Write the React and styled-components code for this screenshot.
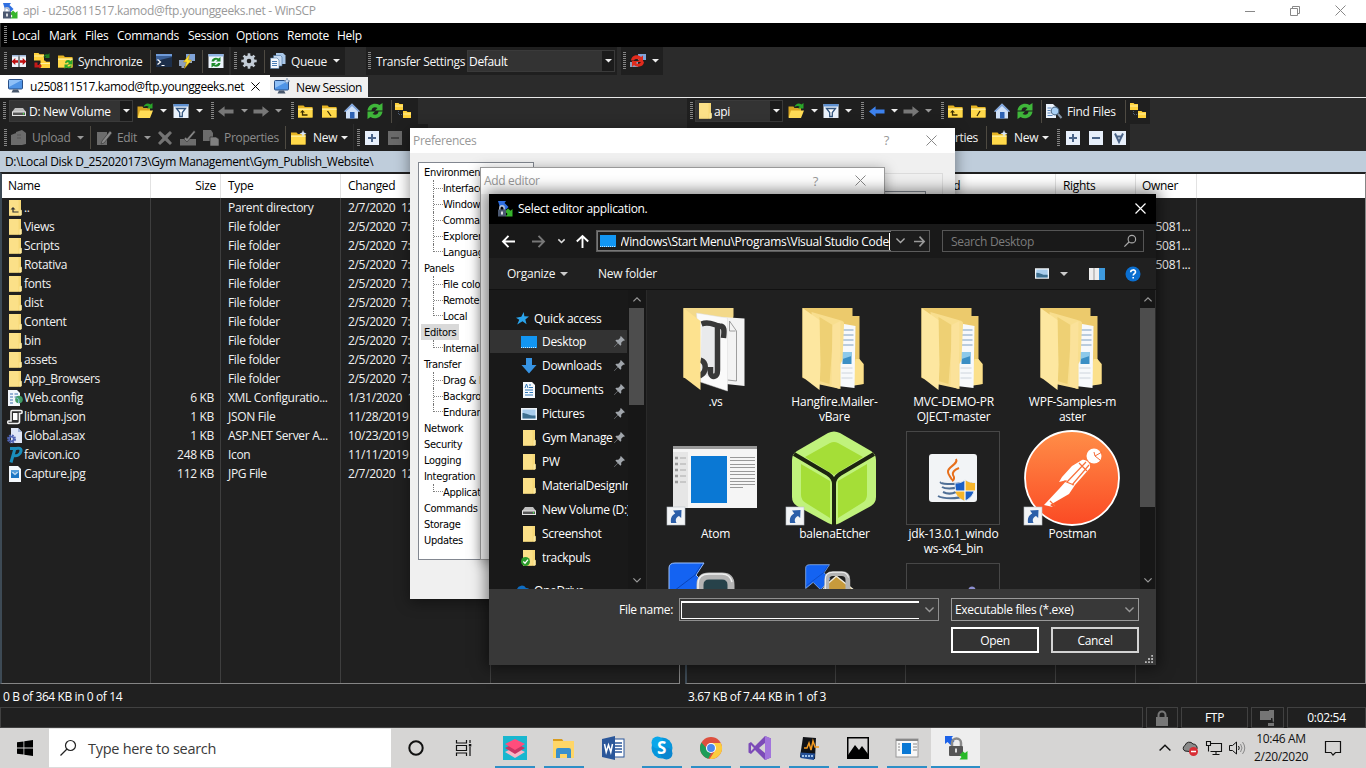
import React from 'react';
import styled, { createGlobalStyle, css } from 'styled-components';

const Global = createGlobalStyle`
  * { box-sizing: border-box; }
  body { margin: 0; background: #202020; }
  svg { display: block; flex: none; overflow: visible; }
`;

const ui = css`
  font-family: 'Open Sans', 'Noto Sans', sans-serif;
  font-size: 12px;
  letter-spacing: -0.32px;
  white-space: pre;
`;

/* ---------- main window ---------- */

const Desktop = styled.div`
  ${ui}
  position: relative;
  width: 1366px;
  height: 768px;
  overflow: hidden;
  display: flex;
  flex-direction: column;
  background: #2b2b2b;
  color: #fff;
`;
const TitleBar = styled.header`
  height: 23px;
  flex: none;
  display: flex;
  align-items: center;
  background: #fff;
  color: #999;
  padding: 0 20px 2px 2px;
`;
const TitleText = styled.span`
  flex: 1;
  margin-left: ${(p) => p.$m ?? 3}px;
`;
const WindowButtons = styled.div`
  display: flex;
  align-items: center;
  gap: 35px;
`;
const MenuBar = styled.nav`
  height: 24px;
  flex: none;
  display: flex;
  align-items: center;
  background: #000;
  margin-left: 1px;
  padding-left: 3px;
  letter-spacing: -0.25px;
`;
const MenuItem = styled.span`
  width: ${(p) => p.$w}px;
  padding-left: ${(p) => p.$p || 0}px;
`;
const ToolRow = styled.div`
  height: ${(p) => p.$h || 28}px;
  flex: none;
  display: flex;
  align-items: stretch;
`;
const Segment = styled.div`
  display: flex;
  align-items: center;
  background: #1f1f1f;
  padding-right: ${(p) => p.$pr || 0}px;
  margin-right: ${(p) => p.$gap || 0}px;
`;
const Cell = styled.div`
  flex: none;
  width: ${(p) => p.$w}px;
  display: flex;
  align-items: center;
  justify-content: center;
`;
const Label = styled.span`
  flex: none;
  width: ${(p) => p.$w}px;
  padding-left: ${(p) => p.$p || 0}px;
  padding-right: ${(p) => p.$r || 0}px;
  text-align: ${(p) => (p.$r ? 'right' : 'left')};
  color: ${(p) => (p.$off ? '#8c8c8c' : '#f4f4f4')};
`;
const GripDots = styled.i`
  width: 3px;
  height: 18px;
  background: repeating-linear-gradient(#858585 0 1px, transparent 1px 2px);
`;
const Line = styled.i`
  width: 1px;
  height: 23px;
  background: #4e4a42;
`;
const Combo = styled.div`
  flex: none;
  width: ${(p) => p.$w}px;
  height: 22px;
  display: flex;
  align-items: center;
  background: #333;
  border: 1px solid #3a3a3a;
  padding-left: ${(p) => p.$p || 2}px;
  gap: ${(p) => p.$g ?? 3}px;
`;
const ComboText = styled.span`
  flex: 1;
`;
const ComboArrow = styled.span`
  width: 12px;
  height: 20px;
  background: #1b1b1b;
  display: flex;
  align-items: center;
  justify-content: center;
`;
const Tabs = styled.div`
  height: 23px;
  flex: none;
  display: flex;
  align-items: flex-end;
  border-bottom: 1px solid #e8e8e8;
  letter-spacing: -0.41px;
`;
const Tab = styled.div`
  display: flex;
  align-items: center;
  color: #000;
  background: ${(p) => (p.$active ? '#fff' : '#f0f0f0')};
  width: ${(p) => p.$w}px;
  height: ${(p) => (p.$active ? 22 : 20)}px;
  padding-left: ${(p) => (p.$active ? 8 : 4)}px;
  gap: 6px;
`;
const TabTitle = styled.span`
  margin-right: 1px;
`;
const Panels = styled.main`
  flex: 1;
  min-height: 0;
  display: flex;
  background: #202020;
`;
const Panel = styled.section`
  width: ${(p) => p.$w}px;
  display: flex;
  flex-direction: column;
`;
const ToolArea = styled.div`
  display: flex;
  flex-direction: column;
  background: #2b2b2b;
  padding-left: ${(p) => p.$p || 0}px;
`;
const PanelGap = styled.div`
  width: 5px;
  flex: none;
  background: linear-gradient(#2b2b2b 53px, #bfcddb 53px 74px, #202020 74px);
`;
const PathBar = styled.div`
  height: 21px;
  flex: none;
  background: #bfcddb;
  color: #000;
  line-height: 22px;
  padding-left: 5px;
  letter-spacing: -0.35px;
`;
const FileTable = styled.div`
  flex: 1;
  min-height: 0;
  display: flex;
  flex-direction: column;
  border-top: 2px solid #202020;
  border-bottom: 1px solid #858585;
  border-right: 1px solid #858585;
  border-left: 2px solid #3d4a55;
  background: #202020;
  overflow: hidden;
`;
const TRow = styled.div`
  display: flex;
  flex: ${(p) => (p.$fill ? '1' : 'none')};
  height: ${(p) => (p.$head ? 24 : 19)}px;
  background: ${(p) => (p.$head ? '#fff' : 'transparent')};
  color: ${(p) => (p.$head ? '#000' : '#f2f2f2')};
`;
const TCell = styled.div`
  flex: none;
  width: ${(p) => p.$w}px;
  border-right: 1px solid ${(p) => (p.$head ? '#e2e2e2' : '#3e3e3e')};
  display: flex;
  align-items: center;
  justify-content: ${(p) => (p.$right ? 'flex-end' : 'flex-start')};
  padding: 0 ${(p) => (p.$head ? 4 : 6)}px ${(p) => (p.$head ? 1 : 0)}px ${(p) => (p.$icon ? 4 : p.$first ? 6 : 7)}px;
  gap: 1px;
  overflow: hidden;
`;
const IconBox = styled.span`
  width: 17px;
  display: flex;
  justify-content: center;
`;
const PanelStatus = styled.div`
  height: 23px;
  flex: none;
  line-height: 25px;
  padding-left: 3px;
  letter-spacing: -0.4px;
`;
const StatusBar = styled.footer`
  height: 21px;
  flex: none;
  display: flex;
  gap: 3px;
  background: #202020;
`;
const StatusCell = styled.div`
  width: ${(p) => p.$w}px;
  flex: none;
  border: 1px solid #414141;
  display: flex;
  align-items: center;
  justify-content: center;
`;

/* ---------- taskbar ---------- */

const TaskBar = styled.div`
  height: 40px;
  flex: none;
  display: flex;
  align-items: stretch;
  background: #d6d5d4;
  color: #111;
`;
const SearchBox = styled.div`
  width: 342px;
  background: #fff;
  display: flex;
  align-items: center;
  gap: 12px;
  padding-left: 11px;
  border-top: 1px solid #e4e4e4;
  border-bottom: 1px solid #dcdcdc;
  font-size: 14.5px;
  color: #3a3a3a;
  letter-spacing: -0.28px;
`;
const TaskItem = styled.div`
  width: ${(p) => p.$w || 49}px;
  display: flex;
  align-items: center;
  justify-content: center;
  background:
    linear-gradient(#2e8fc6, #2e8fc6) center bottom / ${(p) => (p.$run ? (p.$active ? '49px' : '40px') : '0')} 2px no-repeat,
    ${(p) => (p.$active ? '#eeeeee' : 'transparent')};
`;
const Clock = styled.div`
  width: 66px;
  text-align: center;
  line-height: 18px;
  padding-top: 2px;
`;
const Spacer = styled.div`
  flex: ${(p) => (p.$w ? 'none' : '1')};
  width: ${(p) => p.$w || 0}px;
`;

/* ---------- dialogs ---------- */

const Dialog = styled.div`
  position: absolute;
  left: ${(p) => p.$x}px;
  top: ${(p) => p.$y}px;
  width: ${(p) => p.$w}px;
  height: ${(p) => p.$h}px;
  display: flex;
  flex-direction: column;
  background: ${(p) => p.$bg || '#f0f0f0'};
  color: ${(p) => (p.$bg ? '#fff' : '#000')};
  border: ${(p) => p.$border || 'none'};
  box-shadow: ${(p) => p.$shadow || '0 3px 14px rgba(0, 0, 0, .45)'};
`;
const DialogTitle = styled.div`
  height: ${(p) => p.$h}px;
  flex: none;
  display: flex;
  align-items: center;
  background: ${(p) => (p.$dark ? '#000' : '#fff')};
  color: ${(p) => (p.$dark ? '#fff' : '#999')};
  padding: 0 ${(p) => p.$pr}px 1px ${(p) => p.$pl}px;
`;
const Help = styled.span`
  margin-right: ${(p) => p.$m || 37}px;
  font-size: 13px;
`;
const PrefBody = styled.div`
  flex: 1;
  display: flex;
  padding: 9px 12px 39px 8px;
  align-items: stretch;
`;
const Tree = styled.div`
  width: 116px;
  background: #fff;
  border: 1px solid #828790;
  padding: 1px 0 0 2px;
  font-family: 'DejaVu Sans Condensed', 'Noto Sans', sans-serif;
  font-size: 11px;
  letter-spacing: -0.3px;
`;
const TreeRow = styled.div`
  height: 16px;
  display: flex;
  align-items: center;
  color: #000;
`;
const TreeBranch = styled.i`
  align-self: stretch;
  width: 10px;
  margin-left: 12px;
  margin-bottom: ${(p) => (p.$last ? 8 : 0)}px;
  border-left: 1px dotted #777;
  background: linear-gradient(90deg, #888 50%, transparent 50%) 0 ${(p) => (p.$last ? '100%' : '8px')} / 2px 1px repeat-x;
`;
const TreeText = styled.span`
  padding: 1px 3px 0;
  line-height: 15px;
  margin-left: ${(p) => (p.$sub ? -3 : 0)}px;
  background: ${(p) => (p.$sel ? '#d9d9d9' : 'transparent')};
`;
const PrefPage = styled.div`
  flex: 1;
  margin-top: 11px;
  border: 1px solid #dcdcdc;
  padding: 17px 16px;
`;
const PrefList = styled.div`
  height: 200px;
  border: 1px solid #828790;
`;
const NavBar = styled.div`
  height: 34px;
  flex: none;
  display: flex;
  align-items: center;
  background: #191919;
  padding-left: 12px;
`;
const AddressBox = styled.div`
  width: 334px;
  height: 22px;
  display: flex;
  align-items: center;
  border: 1px solid #5c5c5c;
  background: #1c1c1c;
`;
const AddressEdit = styled.div`
  width: 294px;
  height: 20px;
  display: flex;
  align-items: center;
  border: 1px solid #777;
  border-right: none;
  gap: 5px;
  padding-left: 2px;
`;
const AddressClip = styled.div`
  flex: 1;
  overflow: hidden;
  display: flex;
  justify-content: flex-end;
  border-right: 1px solid #fff;
  line-height: 17px;
  margin-right: 1px;
  letter-spacing: -0.3px;
`;
const SearchField = styled.div`
  width: 202px;
  height: 22px;
  margin-left: 12px;
  border: 1px solid #555;
  display: flex;
  align-items: center;
  justify-content: space-between;
  padding: 0 7px 0 8px;
  color: #7c7c7c;
`;
const CommandBar = styled.div`
  height: 32px;
  flex: none;
  display: flex;
  align-items: center;
  background: #202020;
  border-bottom: 1px solid #111;
  padding-left: 18px;
  letter-spacing: -0.25px;
`;
const Browser = styled.div`
  height: 299px;
  flex: none;
  display: flex;
  overflow: hidden;
`;
const Sidebar = styled.div`
  width: 139px;
  background: #191919;
  padding-top: 16px;
`;
const SideRow = styled.div`
  height: 24px;
  display: flex;
  align-items: center;
  margin-top: ${(p) => p.$gap || 0}px;
  padding: 0 0 ${(p) => (p.$root ? 0 : 1)}px ${(p) => (p.$root ? 25 : 32)}px;
  background: ${(p) => (p.$sel ? 'linear-gradient(#333, #333) 1px 0 / 137px 23px no-repeat' : 'none')};
`;
const SideIcon = styled.span`
  width: 16px;
  display: flex;
  justify-content: center;
  margin-right: ${(p) => (p.$root ? 4 : 5)}px;
`;
const SideText = styled.span`
  flex: none;
  width: ${(p) => (p.$pin ? 72 : 86)}px;
  overflow: hidden;
`;
const ScrollBar = styled.div`
  width: ${(p) => p.$w}px;
  flex: none;
  background: #171717;
  display: flex;
  flex-direction: column;
  align-items: ${(p) => (p.$left ? 'flex-start' : 'center')};
  border-right: 1px solid #2a2a2a;
  padding-left: ${(p) => (p.$left ? 1 : 0)}px;
`;
const ScrollBtn = styled.div`
  height: 18px;
  width: 15px;
  display: flex;
  align-items: center;
  justify-content: center;
`;
const Thumb = styled.div`
  width: 15px;
  height: ${(p) => p.$h}px;
  background: #4d4d4d;
  margin-bottom: auto;
`;
const FileGrid = styled.div`
  width: 493px;
  background: #202020;
  display: grid;
  grid-template-columns: repeat(4, 119px);
  grid-auto-rows: 132px;
  padding: 8px 0 0 9px;
  align-content: start;
`;
const FileItem = styled.div`
  display: flex;
  flex-direction: column;
  align-items: center;
  text-align: center;
  line-height: 15px;
  letter-spacing: -0.25px;
`;
const FileIcon = styled.div`
  width: 96px;
  height: 96px;
  flex: none;
  margin-right: 1px;
`;
const Footer = styled.div`
  flex: 1;
  background: #383838;
  display: grid;
  grid-template-columns: 190px 260px 12px 188px;
  grid-template-rows: 24px 26px;
  row-gap: 5px;
  padding-top: 9px;
`;
const FooterLabel = styled.span`
  text-align: right;
  padding-right: 6px;
  line-height: 24px;
`;
const NameBox = styled.div`
  height: 23px;
  border: 1px solid #8f8f8f;
  display: flex;
  align-items: center;
  padding: 0 4px 0 1px;
  justify-content: space-between;
`;
const NameInput = styled.div`
  width: 238px;
  height: 18px;
  border: 1px solid #fff;
  border-top-width: 2px;
  border-right: none;
`;
const TypeBox = styled.div`
  grid-column: 4;
  height: 23px;
  border: 1px solid #9a9a9a;
  display: flex;
  align-items: center;
  justify-content: space-between;
  padding: 0 4px 0 3px;
`;
const ButtonRow = styled.div`
  grid-column: 4;
  display: flex;
  justify-content: space-between;
`;
const Button = styled.div`
  width: 88px;
  height: 26px;
  border: 2px solid ${(p) => (p.$primary ? '#fff' : '#d4d4d4')};
  background: #333;
  display: flex;
  align-items: center;
  justify-content: center;
`;
const ResizeGrip = styled.div`
  position: absolute;
  right: 3px;
  bottom: 2px;
`;

/* ---------- icons ---------- */

const Svg = ({ s = 16, w, h, vb, children, ...r }) => (
  <svg width={w || s} height={h || s} viewBox={vb || '0 0 16 16'} fill="none" {...r}>{children}</svg>
);
const Caret = ({ c = '#eee', w = 7 }) => <Svg w={w} h={w / 2} vb="0 0 8 4"><path d="M0 0h8L4 4z" fill={c} /></Svg>;
const Grip = ({ w }) => <Cell $w={w}><GripDots /></Cell>;
const Sep = ({ w }) => <Cell $w={w}><Line /></Cell>;
const Logo = ({ s = 16 }) => (
  <Svg s={s}>
    <path d="M1 0h8L7.500 2l4 4-3 3-4-4L3 6.500z" fill="#2f6fe0" />
    <path d="M15.500 15.500V8l-2 1.700L11 7.500 8 10.500l2.500 2.500-2 2.500z" fill="#36b52c" />
    <path d="M2.800 9V7a2.200 2.200 0 0 1 4.400 0v2" stroke="#b9c2d0" strokeWidth="1.400" />
    <rect x="1" y="8.500" width="8" height="7" fill="#4b5870" /><rect x="4.200" y="10.500" width="1.600" height="3" fill="#fff" />
  </Svg>
);
const Cross = ({ s = 11, c = '#888', sw = 1 }) => <Svg s={s} vb="0 0 11 11"><path d="M.5.500l10 10M10.500.500l-10 10" stroke={c} strokeWidth={sw} /></Svg>;
const Chev = ({ up, c = '#999', w = 8, sw = 1.500 }) => <Svg w={w} h={w * 0.6} vb="0 0 10 6"><path d={up ? 'M.5 5.500L5 1l4.500 4.500' : 'M.5.500L5 5 9.500.500'} stroke={c} strokeWidth={sw} /></Svg>;
const Compare = () => (
  <Svg><rect x="1" y="2" width="6.500" height="12" fill="#eef3fa" /><rect x="8.500" y="2" width="6.500" height="12" fill="#eef3fa" /><path d="M1 2h6.500v1.500H1zM8.500 2H15v1.500H8.500z" fill="#9db6d8" /><path d="M.5 8.500L4.300 5v2.300H7v2.400H4.300V12zM15.500 8.500L11.700 5v2.300H9v2.400h2.700V12z" fill="#c01010" /></Svg>
);
const YFolder = ({ children }) => (
  <Svg><path d="M1 2.500h5.500L8 4h7.500v10.500H1z" fill="#e6b422" /><path d="M1 5.500h14.500v9H1z" fill="#ffd94a" /><path d="M1 5.500h14.500v1.300H1z" fill="#fff0a0" />{children}</Svg>
);
const SyncFolders = () => (
  <Svg><path d="M0 0h4.500l1 1.200H10v6.300H0zM6.500 7.500H11l1 1.200h4V15H6.500z" fill="#ffd23c" /><path d="M0 2.500h10v1H0zM6.500 10H16v1H6.500z" fill="#fff0a0" /><path d="M9.500 4.500C9.500 1.500 12 .5 14 1.500L15.500 0v5h-5l1.700-1.500c-1-.5-1.500 0-2.700 1z" fill="#1f7d1f" /><path d="M.5 9.500h3V12H5v-1.500L8 13l-3 2.500V14.500H.5z" fill="#c41a1a" /></Svg>
);
const Synchronize = () => <YFolder><path d="M8 9.500c1-3 4-3 5.500-1.500L15.500 6.500v5h-5l1.500-1.500c-1-1-2-1-3 .5zM15 12.500c-1 3-4 3.500-6 2L7.500 16v-4.500h4.200l-1.500 1.500c1.500 1 2.500.5 3-.5z" fill="#2aa52a" /></YFolder>;
const Terminal = () => <Svg><rect x="0" y="1" width="16" height="13" fill="#1d2f4a" /><path d="M0 1h16v3L0 8z" fill="#3a5f96" /><rect x="0" y="1" width="16" height="2" fill="#6f9bd8" /><path d="M1.500 6.500l3 2.500-3 2.500M5.500 12.500h3" stroke="#fff" strokeWidth="1.200" /></Svg>;
const Bolt = () => <Svg><rect x="7" y="1" width="9" height="7" fill="#7fa3d8" /><path d="M10 8h3v2h-3z" fill="#9aa7b8" /><rect x="0" y="7" width="8" height="6" fill="#8ca0bd" /><path d="M2.500 13h3v2h-3z" fill="#9aa7b8" /><path d="M10.500 1.500L4.500 9h3l-2 6.500 7-8.500H9.500z" fill="#ffe02e" stroke="#b98a00" strokeWidth=".5" /></Svg>;
const RefreshWin = () => <Svg><rect x=".5" y="1" width="15" height="14" fill="#eef5fd" /><rect x=".5" y="1" width="15" height="2.500" fill="#8fb3e2" /><path d="M3.500 8.500C4 4.500 8.500 4 10.500 5.500L12.500 4v4.500H8L9.500 7C8 6.500 6.500 7 6 8.500zM12.500 10c-.5 4-5 4.500-7 3L3.500 14.500V10H8l-1.500 1.500c1.500.5 3 0 3.500-1.500z" fill="#1f8a2c" /></Svg>;
const Gear = () => (
  <Svg><circle cx="8" cy="8" r="4" stroke="#c3ccd6" strokeWidth="3.400" />{[0, 45, 90, 135, 180, 225, 270, 315].map((a) => <rect key={a} x="6.700" y=".3" width="2.600" height="3" fill="#c3ccd6" transform={`rotate(${a} 8 8)`} />)}</Svg>
);
const Queue = () => <Svg><path d="M6 0h7l2.500 2.500V11H6z" fill="#a9c7e8" /><path d="M3.500 2.500h7L12 4v9H3.500z" fill="#c6dbf2" stroke="#47729e" strokeWidth=".6" /><path d="M.5 5H7l2 2v8.500H.5z" fill="#f4f9ff" stroke="#47729e" strokeWidth=".6" /><path d="M2 8.500h5M2 10.500h5M2 12.500h5" stroke="#4a7fb8" /></Svg>;
const RedSync = () => <Svg><rect x="8" y="1" width="8" height="6" fill="#7fa3d8" /><rect x="0" y="9" width="8" height="5" fill="#8ca0bd" /><path d="M1 7.500C1.500 2 8 1 11 4l2-1.500V9H7l2-2C7.500 5.500 4.500 6 4 7.500zM14 8.500c0 5.500-7 6.500-10 3.500L2 14V8h6L6 10c1.500 1.500 4.500 1 5-1.500z" fill="#e02b1d" /></Svg>;
const Monitor = ({ star }) => <Svg><rect x=".5" y="1.500" width="14" height="9.500" rx="1" fill="#4f94e6" stroke="#294f86" /><path d="M1 2h13L1 9z" fill="#8fc0f7" /><path d="M5 11.500h5l1.500 3h-8z" fill="#47566b" />{star && <path d="M13-1l.8 2.200L16 2l-2.200.8L13 5l-.8-2.200L10 2l2.200-.8z" fill="#dcebff" stroke="#7e94ad" strokeWidth=".6" />}</Svg>;
const Drive = () => <Svg w={14} h={10} vb="0 0 14 10"><path d="M3 2h8l3 4H0z" fill="#bfbfbf" /><rect y="5.500" width="14" height="4.500" fill="#e4e4e4" /><rect x="1" y="6.500" width="12" height="2.500" fill="#555" /><circle cx="11.500" cy="7.700" r=".7" fill="#4f4" /></Svg>;
const OpenFolder = () => <Svg><path d="M.5 3.500h5l1 1.500H13v9H.5z" fill="#d9a520" /><path d="M3 7.500h13l-3 7.500H.5z" fill="#ffdc55" /><path d="M6.500 4C7.500.5 11-.500 13.500 1.500L15.500 0v5.500H10l1.700-1.700C10 2.500 8.500 3 6.500 4z" fill="#2aa52a" /></Svg>;
const Filter = () => <Svg><rect x=".5" y="1" width="15" height="14" fill="#eaf2fc" /><rect x=".5" y="1" width="15" height="2.500" fill="#5e90cf" /><path d="M3.500 5.500h9L9.300 9.500v4H6.700v-4z" fill="#fff" stroke="#33557e" strokeWidth="1.300" /></Svg>;
const Arrow = ({ right, c = '#777' }) => <Svg w={16} h={11} vb="0 0 17 11"><path d="M0 5.500L7 0v3.500h9.500v4H7V11z" fill={c} transform={right ? 'translate(17 0) scale(-1 1)' : undefined} /></Svg>;
const FolderUp = () => <YFolder><path d="M5.500 9v3h5" stroke="#3a2c00" strokeWidth="1.300" /><path d="M3 9.500L5.500 7 8 9.500z" fill="#3a2c00" /></YFolder>;
const FolderRoot = ({ back }) => <YFolder><path d={back ? 'M6.500 8l3.500 5' : 'M10 8l-3 5'} stroke="#3a2c00" strokeWidth="1.300" /></YFolder>;
const Home = () => <Svg><path d="M8 .5L0 8.500h2V15.500h12v-7h2z" fill="#cfe0f8" /><path d="M8 .5L0 8.500h2l6-5.500 6 5.500h2z" fill="#7da3dc" /><rect x="6" y="9" width="4.500" height="6.500" fill="#2c61b4" /></Svg>;
const Refresh = () => <Svg><path d="M.5 7.500C1 1.500 8-1 12.500 2L15.500 0v7.500H8l2.500-2.500C8 3.500 5 4 4.500 7.500zM15.500 8.500c-.5 6-7.500 8.500-12 5.500L.5 16V8.500H8L5.500 11C8 12.500 11 12 11.500 8.500z" fill="#3fb63a" /></Svg>;
const FolderTree = () => <Svg><path d="M0 0h3.500l1 1H8v6H0zM8 8h3.500l1 1H16v6H8z" fill="#ffd23c" /><path d="M0 2.500h8v1H0zM8 10.500h8v1H8z" fill="#fff0a0" /><path d="M3.500 8v3.500H7" stroke="#4c5c74" strokeDasharray="1 1" /></Svg>;
const NewFolder = () => <YFolder><path d="M13 0l.9 2.600 2.600.9-2.600.9L13 7l-.9-2.600-2.600-.9 2.600-.9z" fill="#d7e6fa" /></YFolder>;
const SqIcon = ({ d, off }) => <Svg s={14} vb="0 0 14 14"><rect width="14" height="14" fill={off ? '#6a6a6a' : '#e7effa'} /><path d={d} stroke={off ? '#444' : '#4a6488'} strokeWidth="2" /></Svg>;
const Find = () => <Svg><path d="M0 1h7l3 3v11H0z" fill="#eaf2fc" /><path d="M1.500 5h4M1.500 7.500h3M1.500 10h3M1.500 12.500h5" stroke="#5c86bb" /><circle cx="9" cy="8" r="3.800" fill="#a9d0f5" stroke="#53708f" strokeWidth="1.200" /><path d="M12 11l3.500 4" stroke="#8495a8" strokeWidth="2" /></Svg>;
const GUpload = () => <Svg><path d="M0 5l5-2v12H0zM5 2l6-2 4 3v11l-4 1H5z" fill="#6c6c6c" /><path d="M6 5h4M6 8h4" stroke="#555" /></Svg>;
const GEdit = () => <Svg><path d="M1 2h10v13H1z" fill="#6c6c6c" /><path d="M6 11L14 1l2 2-8 10-3 1z" fill="#888" stroke="#333" strokeWidth=".6" /></Svg>;
const GCross = () => <Svg><path d="M1 3l2-2 5 4.500L13 1l2 2-4.500 5L15 13l-2 2-5-4.500L3 15l-2-2 4.500-5z" fill="#737373" /></Svg>;
const GRename = () => <Svg><rect x="0" y="9" width="16" height="6.500" fill="#6c6c6c" /><path d="M4 9l3 3L15.500 2l-1.500-1.500L7 8.500 5.500 7z" fill="#858585" stroke="#222" strokeWidth=".5" /></Svg>;
const GProps = () => <Svg><path d="M0 0h8l2 3v8H0z" fill="#6c6c6c" /><path d="M7 7h6l3 2v7H7z" fill="#808080" stroke="#222" strokeWidth=".6" /></Svg>;
const WFolder = ({ up, check }) => (
  <Svg><path d="M2 0h12v10l.7.5V15l-1 .8H2z" fill="#f6d877" /><path d="M2 0h9.500v15.500H2z" fill="#fde490" opacity=".7" /><path d="M12.500 10.500l2-.8V15l-2 .8z" fill="#fbe9a4" />{up && <g><path d="M6 9v3h5.500" stroke="#333" strokeWidth="1.200" /><path d="M3.500 9.500L6 7l2.500 2.500z" fill="#333" /></g>}{check && <g><circle cx="4.500" cy="11.500" r="4.500" fill="#2a9a2a" /><path d="M2.300 11.500l1.700 1.700 3-3.500" stroke="#fff" strokeWidth="1.300" /></g>}</Svg>
);
const ConfigFile = () => <Svg><path d="M1 0h9l3 3v13H1z" fill="#f2f6fb" /><path d="M3 4h3M3 7h3M3 10h3M3 13h3M7.500 4H11M7.500 7H10" stroke="#3c6fae" /><circle cx="12" cy="9.500" r="3.800" fill="#3f9b63" /><path d="M9.500 8c2 0 3 2 2 5" stroke="#8ac5ef" /></Svg>;
const ScriptFile = () => <Svg><path d="M5 1.500h9c1.500 0 1.500 3 0 3h-1.500v8c0 1.500-1 2-2 2h-9c-1 0-1-2.500 0-2.500H4V3c0-1 .3-1.500 1-1.500z" fill="#2b2b2b" stroke="#f1f1f1" strokeWidth="1.600" /><path d="M6 4h4.500v7H6z" fill="#fff" /></Svg>;
const AsaxFile = () => <Svg><path d="M4 0h7l4 4v11H4z" fill="#dfe6f6" /><path d="M11 0v4h4z" fill="#9fb2d6" /><circle cx="4.500" cy="11" r="3.200" stroke="#5064b4" strokeWidth="2.600" strokeDasharray="1.700 .8" /><circle cx="4.500" cy="11" r="2.200" stroke="#5064b4" strokeWidth="1.600" /></Svg>;
const FavIcon = () => <Svg><path d="M3 1.500h5L4 15.500M7.800 2C10 .8 14.500.500 14 4c-.5 3.500-4 5.500-8 4.500" stroke="#1a8dbb" strokeWidth="3" /></Svg>;
const ImageFile = () => <Svg><path d="M2 0h9l3 3v13H2z" fill="#f4f8fc" /><rect x="4" y="4" width="8" height="8" fill="#1d76c4" /><path d="M4 4h8v2l-2 2-2 1.500L6 8 4 6z" fill="#8cc3f0" opacity=".5" /><path d="M5.500 6L8 8.500 10.500 6" stroke="#fff" /></Svg>;
const Padlock = () => <Svg><path d="M4.500 7V5a3.500 3.500 0 0 1 7 0v2" stroke="#777" strokeWidth="2" /><rect x="2" y="7" width="12" height="9" fill="#777" /></Svg>;
const Zip = () => <Svg><path d="M0 1h11v9H0zM9 0h5v8H9z" fill="#757575" /><path d="M12 5h2v6l-1 2M8 13h6v3H8z" fill="#757575" /></Svg>;

const DesktopIcon = () => <Svg w={16} h={12} vb="0 0 16 12"><rect width="16" height="12" fill="#1296f3" /><path d="M0 11.500h16" stroke="#bfe3ff" strokeDasharray="1 1" /></Svg>;
const Star = () => <Svg s={13}><path d="M9.500 0l.8 5.200L16 5.500l-4.500 3.700L13 15l-5-3.500-6.500 4 2.500-6L0 7l6.500-1.300z" fill="#2aa4ec" /></Svg>;
const Down = () => <Svg><path d="M5 0h6v7h4.500L8 15.500.500 7H5z" fill="#3794e4" /></Svg>;
const Doc = () => <Svg><path d="M2 0h9l3 3v13H2z" fill="#f6f9fc" /><path d="M8 3h2M8 5.500h4M4 8h8M4 10.500h3M8.500 10.500H12M4 13h8" stroke="#2f77b8" /><path d="M4 6l1.500-4L7 6" stroke="#2f77b8" /></Svg>;
const Pic = () => <Svg w={16} h={12} vb="0 0 16 12"><rect width="16" height="12" fill="#eef3f7" /><rect x="1.500" y="1.500" width="13" height="9" fill="#a9cdec" /><path d="M1.500 5c4 0 7 3 13 2.500v3h-13z" fill="#3e6f8f" /></Svg>;
const Pin = () => <Svg s={11} vb="0 0 12 12"><path d="M7.500 0L12 4.500l-1.200.8-.8-.2-2.200 2.200.2 2.200-1 1L4.300 8 .3 12 0 11.700l4-4L1.500 5l1-1 2.200.200 2.200-2.200-.2-.8z" fill="#a0a5ab" /></Svg>;
const Cloud = () => <Svg w={16} h={10} vb="0 0 16 10"><path d="M3 10a3.500 3.500 0 0 1 0-6 5 5 0 0 1 9-1 4 4 0 0 1 3 7z" fill="#0f6cc0" /></Svg>;
const NavArrow = ({ rot = 0, c = '#fff', s = 13 }) => <Svg s={s} vb="0 0 13 13"><path d="M6.500.800L1 6.500l5.500 5.700M1 6.500h12" stroke={c} strokeWidth="1.900" transform={`rotate(${rot} 6.500 6.500)`} /></Svg>;
const Lens = ({ s = 12, c = '#aaa', sw = 1.500, r = 5 }) => <Svg s={s} vb="0 0 16 16"><circle cx="10.500" cy="5.500" r={r} stroke={c} strokeWidth={sw} /><path d="M7 9L.5 15.500" stroke={c} strokeWidth={sw * 1.100} /></Svg>;

const Shortcut = () => (
  <g><rect x="0" y="77" width="18" height="18" fill="#f2f4f6" stroke="#b9bfc6" strokeWidth=".6" /><path d="M4 93c-.5-5 .5-7.500 4.200-9.500L6 80.500l8.500-.5-.3 8-2.200-2c-3 1.500-4 3.500-2.500 7z" fill="#2b5ea8" /></g>
);
const Big = ({ children }) => <Svg s={96} vb="0 0 96 96">{children}</Svg>;
const FolderBig = () => (
  <Big>
    <g transform="translate(-.5 0)">
      <path d="M17 10h50v8h7v44l4 4v20l-25 2L17 80z" fill="#ecca6c" />
      <path d="M70 61h4l4 5v20l-12 2z" fill="#fbe08b" />
      <path d="M53 25l17 3-1 62-17-2z" fill="#f7f9fb" />
      <path d="M57 32h11M57 37h11M57 42h11M57 47h11" stroke="#6e93b8" strokeWidth=".9" />
      <path d="M56 70h11M56 75h11M56 80h11" stroke="#c3ccd6" strokeWidth=".8" />
      <rect x="57" y="54" width="9" height="12" fill="#3b8fc4" /><path d="M57 54h9v4l-9 3z" fill="#8cc9ea" />
      <path d="M26 14l28 8c4 1 5 2 4.500 5L57 62l-2 4v25L32 86z" fill="#f8de8e" />
      <path d="M34 19l13 8v17l-3 42-10-3z" fill="#eed074" />
      <path d="M47 27l8-4-1 68-8-3z" fill="#fbe29a" />
      <path d="M17 10l17 12 1 45-1 25L17 79z" fill="#fde7a0" />
    </g>
  </Big>
);
const FolderJs = () => (
  <Big>
    <g transform="translate(-.5 0)">
      <path d="M17 10h50v8l-11 60-39 2z" fill="#f3d98a" />
      <path d="M55 19l23 1.500V88l-23-2.500z" fill="#f3f3f3" /><path d="M63 23l7 10v50l-9-1M63 23v10h6" stroke="#888" strokeWidth=".8" />
      <path d="M30 15l31 5v73l-27-9z" fill="#fafafa" stroke="#ddd" strokeWidth=".5" />
      <path d="M35 27h16v42l-8 10-9-3z" fill="#e9eaec" />
      <path d="M35 26c8-3 12 1 18 2 5 0 5 4 4 12M51 29v43c0 8-6 8-7 3v-6M34 62c6 2 7 12-1 16" stroke="#383838" strokeWidth="5.500" />
      <path d="M17 10l17 13v69L17 79z" fill="#fde28f" />
    </g>
  </Big>
);
const AtomIcon = () => (
  <Big>
    <rect x="6" y="16" width="84" height="62" fill="#f5f5f5" /><rect x="6" y="16" width="84" height="3" fill="#999" /><rect x="6" y="22" width="15" height="56" fill="#e6e6e6" />
    <path d="M8 28h3M8 34h3M8 40h3M8 46h3M8 52h3" stroke="#999" strokeWidth="2.500" /><path d="M13 28h6M13 34h6M13 40h6M13 46h6M13 52h6" stroke="#aaa" />
    <rect x="24" y="26" width="36" height="47" fill="#0a78d4" />
    <path d="M63 27.500h25M63 30.500h25M63 34.500h25M63 37.500h25M63 41.500h25M63 44.500h25M63 48.500h25M63 51.500h25M63 54.500h25M63 57.500h13" stroke="#999" />
    <Shortcut />
  </Big>
);
const EtcherIcon = () => (
  <Big>
    <path d="M42 3q6-3 12 0l31 18q5 3 5 9v37q0 6-5 9L54 93q-6 3-12 0L11 76q-5-3-5-9V30q0-6 5-9z" fill="#c0f27c" />
    <path d="M44 13q4-2 8 0l25 14-29 18-29-18zM15 34l29 17v37L20 73q-5-3-5-8zM81 34L52 51v37l24-15q5-3 5-8z" fill="#a5de37" />
    <path d="M8 24l34 20q6 4 6 10v41M88 24L54 44q-6 4-6 10" stroke="#1c2410" strokeWidth="4" />
    <Shortcut />
  </Big>
);
const JavaIcon = () => (
  <Big>
    <rect x="1.500" y="1.500" width="93" height="93" stroke="#474747" />
    <rect x="24" y="24" width="48" height="48" rx="3" fill="#f2f4f6" />
    <path d="M51 29c3 5-9 8-8 13 0 3 3 5 4 8M54 38c-5 2-7 4-6 7 2 3 1 5-1 6" stroke="#e76f1b" strokeWidth="2" />
    <path d="M36 52c-3 2 14 3 19 1M37 57c3 2 11 2 16 0M38 62c4 2 9 2 13 0M33 66c5 3 20 3 26 0" stroke="#4f6f96" strokeWidth="2" />
    <path d="M60 50c4 3 7 3 10 3 0 9-2 14-10 18-8-4-10-9-10-18 3 0 6 0 10-3z" fill="#1c5fc4" stroke="#dfe6ee" />
    <path d="M60 50c4 3 7 3 10 3v8H60zM60 61v10c-6-3-9-6-9.700-10z" fill="#f6b52b" />
    <path d="M60 50v21M50 61h20" stroke="#fff" strokeWidth="1.200" />
  </Big>
);
const PostmanIcon = () => (
  <Big>
    <defs><linearGradient id="pm" x1="0" y1="0" x2="0" y2="1"><stop offset="0" stopColor="#ff8e48" /><stop offset="1" stopColor="#fb4a24" /></linearGradient></defs>
    <circle cx="48" cy="48" r="47" fill="url(#pm)" stroke="#fff" strokeWidth="1.800" />
    <circle cx="70" cy="26" r="7.500" fill="#fff" /><path d="M78 22l-7 4 5 4M71 26l-1-4" stroke="#f56a35" />
    <path d="M58 30c4-1 9 3 8 8L51 55l-6 9-19 11 3 2-9-2 15-16 8-9-8 2 3-5 10-11z" fill="#fff" />
    <path d="M62 32L43 52M65 35L48 55M40 51l10 4M26 71l5 5M55 33l8 8" stroke="#f8713c" strokeWidth="1.200" />
    <Shortcut />
  </Big>
);
const PuttyIcon = ({ small }) => (
  <Big>
    <g transform={small ? 'translate(19 2) scale(.68)' : 'translate(1 0)'}>
      <path d={small ? 'M1 6q0-5 6-5h29l-8 12 9 9-14 16-11-11L1 36z' : 'M1 6q0-5 6-5h29l-8 12 9 9-6 20H1z'} fill="#1463f2" stroke="#9cc2ff" strokeWidth="1" />
      <path d="M2 32L27 13 34 2" stroke="#0a44b8" strokeWidth="1" />
      {small && <path d="M30 32l16-14 28 22v10H20z" fill="#c79a3c" stroke="#f0ead8" strokeWidth="2" />}
      <path d="M32 42V23q0-9 9-9h13q9 0 9 9v19" stroke="#b4b4b4" strokeWidth="7" fill={small ? 'none' : '#27424a'} />
      <path d="M30 40V22q0-10 11-10h13q8 0 10 8" stroke="#f0f0f0" strokeWidth="1.500" />
    </g>
  </Big>
);
const SetupIcon = () => <Big><rect x="1.500" y="1.500" width="93" height="93" stroke="#474747" /><circle cx="67" cy="28" r="3.500" fill="#8d8fd0" /></Big>;

const AppPink = () => <Svg s={24} vb="0 0 24 24"><rect width="24" height="24" fill="#19b7cf" /><path d="M2 16l10-5 10 5-10 6z" fill="#f7b6c6" /><path d="M2 12l10-5 10 5-10 6z" fill="#c93563" /><path d="M2 8l10-5 10 5-10 6z" fill="#ff4d7c" /></Svg>;
const Explorer = () => <Svg s={24} vb="0 0 24 24"><path d="M1 3h9l2 3h-11z" fill="#d99c1d" /><path d="M1 5h21v17H1z" fill="#ffd667" /><path d="M4 22V14q0-2 2-2h11q2 0 2 2v8h-4v-4H8v4z" fill="#3a90cc" /></Svg>;
const Word = () => <Svg s={24} vb="0 0 24 24"><rect x="12" y="3" width="11" height="18" fill="#fff" stroke="#2b579a" /><path d="M14 7h7M14 10h7M14 13h7M14 16h7" stroke="#2b579a" strokeWidth="1.300" /><path d="M1 3l13-3v24L1 21z" fill="#2b579a" /><path d="M3.500 8l1.700 8L7.500 9l2.300 7 1.700-8" stroke="#fff" strokeWidth="1.500" /></Svg>;
const SkypeLetter = styled.text`
  font: 700 17px 'Open Sans', sans-serif;
  fill: #fff;
`;
const Skype = () => <Svg s={24} vb="0 0 24 24"><circle cx="12" cy="12" r="10.500" fill="#0796dc" /><circle cx="7.500" cy="6.500" r="6" fill="#0aa7ea" /><circle cx="16.500" cy="17.500" r="6" fill="#0a86d0" /><SkypeLetter x="7" y="18">S</SkypeLetter></Svg>;
const Chrome = () => <Svg s={22} vb="0 0 24 24"><circle cx="12" cy="12" r="12" fill="#dd4f3e" /><path d="M1.600 6L9 14.500l3 3L9 23.600A12 12 0 0 1 1.600 6z" fill="#1e9d59" /><path d="M12 6.500h10.700A12 12 0 0 1 10.500 23.900L17 14z" fill="#fccc3e" /><circle cx="12" cy="12" r="5.500" fill="#fff" /><circle cx="12" cy="12" r="4.300" fill="#4a88ec" /></Svg>;
const VStudio = () => <Svg s={24} vb="0 0 24 24"><path d="M17 0l6 2.500v19L17 24 7 14l-4 4-2.500-1.500v-9L3 6l4 4zM17 7l-6 5 6 5zM3 9v6l3-3z" fill="#7c4bb8" fillRule="evenodd" /><path d="M17 0l6 2.500v19L17 24z" fill="#a274dc" /></Svg>;
const Wave = () => <Svg s={24} vb="0 0 24 24"><path d="M6 1l13 1-1 21-15-2z" fill="#101216" /><path d="M3.500 16.500l14.500 1-1 6.500-13.500-2z" fill="#234f96" /><path d="M5 20h11" stroke="#9fc3ec" strokeDasharray="2 1" strokeWidth="2" /><path d="M7 12h3l2-5 2 7 2-9 2 6h4" stroke="#f39a21" strokeWidth="1.500" /></Svg>;
const Photo = () => <Svg s={22} vb="0 0 22 22"><rect x=".75" y=".75" width="20.500" height="20.500" stroke="#000" strokeWidth="1.500" /><path d="M1 18l7-10 4 5 3-4 6 8v4H1z" fill="#000" /></Svg>;
const AppWin = () => <Svg w={22} h={18} vb="0 0 22 18"><rect width="22" height="18" fill="#f7f7f7" stroke="#999" /><path d="M0 1h22" stroke="#888" strokeWidth="2" /><rect x="6" y="4" width="9" height="11" fill="#0a78d4" /><path d="M2 5h2M2 8h2M2 11h2M17 5h4M17 8h4M17 11h4" stroke="#888" /></Svg>;
const ScpApp = () => <Svg s={24} vb="0 0 24 24"><path d="M1 0h8L7.500 2l3 3-4 4-3-3L1 8z" fill="#1c62e8" /><path d="M8 11V7a4.500 4.500 0 0 1 9 0v4" stroke="#8a8a8a" strokeWidth="2.500" /><rect x="5" y="10" width="14" height="10" rx="1" fill="#555" /><rect x="11" y="12.500" width="2" height="4" fill="#ddd" /><path d="M23.500 23.500V15l-2.500 2-2-1.500-3.500 3.500 2 2-2 2.500z" fill="#28b928" /></Svg>;

/* ---------- data ---------- */

const files = [
  ['..', '', 'Parent directory', '2/7/2020  12', <WFolder up />],
  ...['Views', 'Scripts', 'Rotativa', 'fonts', 'dist', 'Content', 'bin', 'assets', 'App_Browsers'].map((n) => [n, '', 'File folder', '2/5/2020  7:', <WFolder />]),
  ['Web.config', '6 KB', 'XML Configuratio...', '1/31/2020  1', <ConfigFile />],
  ['libman.json', '1 KB', 'JSON File', '11/28/2019', <ScriptFile />],
  ['Global.asax', '1 KB', 'ASP.NET Server A...', '10/23/2019', <AsaxFile />],
  ['favicon.ico', '248 KB', 'Icon', '11/11/2019', <FavIcon />],
  ['Capture.jpg', '112 KB', 'JPG File', '2/7/2020  12', <ImageFile />],
];
const tree = [
  ['Environment'], ['Interface', 1], ['Window', 1], ['Commander', 1], ['Explorer', 1], ['Languages', 1, 1],
  ['Panels'], ['File colors', 1], ['Remote', 1], ['Local', 1, 1], ['Editors', 0, 0, 1], ['Internal', 1, 1],
  ['Transfer'], ['Drag & D', 1], ['Background', 1], ['Endurance', 1, 1], ['Network'], ['Security'], ['Logging'],
  ['Integration'], ['Application', 1, 1], ['Commands'], ['Storage'], ['Updates'],
];
const places = [
  ['Desktop', <DesktopIcon />, 1, 1], ['Downloads', <Down />, 1], ['Documents', <Doc />, 1], ['Pictures', <Pic />, 1],
  ['Gym Manage', <WFolder />, 1], ['PW', <WFolder />, 1], ['MaterialDesignIn', <WFolder />], ['New Volume (D:)', <Drive />],
  ['Screenshot', <WFolder />], ['trackpuls', <WFolder check />],
];
const items = [
  ['.vs', <FolderJs />], ['Hangfire.Mailer-\nvBare', <FolderBig />], ['MVC-DEMO-PR\nOJECT-master', <FolderBig />], ['WPF-Samples-m\naster', <FolderBig />],
  ['Atom', <AtomIcon />], ['balenaEtcher', <EtcherIcon />], ['jdk-13.0.1_windo\nws-x64_bin', <JavaIcon />], ['Postman', <PostmanIcon />],
  ['', <PuttyIcon />], ['', <PuttyIcon small />], ['', <SetupIcon />],
];
const leftCols = [149, 70, 120, 150];
const rightCols = [149, 70, 150, 80, 61];

const PlusSq = () => <SqIcon d="M7 3v8M3 7h8" />;

function LeftPanel() {
  return (
    <Panel $w={680}>
      <ToolArea>
        <ToolRow $h={26}>
          <Segment $pr={3}>
            <Grip w={9} />
            <Combo $w={124}><Drive /><ComboText>D: New Volume</ComboText><ComboArrow><Caret /></ComboArrow></Combo>
            <Cell $w={24}><OpenFolder /></Cell><Cell $w={12}><Caret /></Cell>
            <Cell $w={24}><Filter /></Cell><Cell $w={12}><Caret /></Cell>
          </Segment>
          <Segment $pr={2}>
            <Grip w={8} /><Cell $w={20}><Arrow /></Cell><Cell $w={16}><Caret c="#999" /></Cell>
            <Cell $w={18}><Arrow right /></Cell><Cell $w={16}><Caret c="#999" /></Cell>
          </Segment>
          <Segment $pr={4}>
            <Grip w={8} /><Cell $w={18}><FolderUp /></Cell><Cell $w={30}><FolderRoot back /></Cell><Cell $w={16}><Home /></Cell>
            <Cell $w={30}><Refresh /></Cell><Sep w={2} /><Cell $w={22}><FolderTree /></Cell>
          </Segment>
        </ToolRow>
        <ToolRow $h={27}>
          <Segment $pr={2} $gap={1}>
            <Grip w={10} /><Cell $w={18}><GUpload /></Cell><Label $off $p={4} $w={44}>Upload</Label><Cell $w={16}><Caret c="#999" /></Cell>
            <Sep w={4} /><Cell $w={24}><GEdit /></Cell><Label $off $p={1} $w={23}>Edit</Label><Cell $w={16}><Caret c="#999" /></Cell>
            <Cell $w={20}><GCross /></Cell><Cell $w={26}><GRename /></Cell><Cell $w={20}><GProps /></Cell><Label $off $p={3} $w={60}>Properties</Label>
            <Sep w={8} /><Cell $w={18}><NewFolder /></Cell><Label $p={6} $w={30}>New</Label><Cell $w={14}><Caret /></Cell>
          </Segment>
          <Segment $pr={20}><Grip w={8} /><Cell $w={20}><PlusSq /></Cell><Cell $w={26}><SqIcon off d="M3 7h8" /></Cell></Segment>
        </ToolRow>
      </ToolArea>
      <PathBar>D:\Local Disk D_252020173\Gym Management\Gym_Publish_Website\</PathBar>
      <FileTable>
        <TRow $head>
          {['Name', 'Size', 'Type', 'Changed'].map((t, i) => <TCell key={t} $head $first={i === 0} $w={leftCols[i]} $right={i === 1}>{t}</TCell>)}
        </TRow>
        {files.map((f) => (
          <TRow key={f[0]}>
            <TCell $icon $w={leftCols[0]}><IconBox>{f[4]}</IconBox>{f[0]}</TCell>
            <TCell $right $w={leftCols[1]}>{f[1]}</TCell>
            <TCell $w={leftCols[2]}>{f[2]}</TCell>
            <TCell $w={leftCols[3]}>{f[3]}</TCell>
          </TRow>
        ))}
        <TRow $fill>{leftCols.map((w, i) => <TCell key={i} $w={w} />)}</TRow>
      </FileTable>
      <PanelStatus>0 B of 364 KB in 0 of 14</PanelStatus>
    </Panel>
  );
}

function RightPanel() {
  return (
    <Panel $w={681}>
      <ToolArea $p={2}>
        <ToolRow $h={26}>
          <Segment $pr={5}>
            <Grip w={8} />
            <Combo $w={88} $p={1} $g={1}><WFolder /><ComboText>api</ComboText><ComboArrow><Caret /></ComboArrow></Combo>
            <Cell $w={26}><OpenFolder /></Cell><Cell $w={10}><Caret /></Cell><Cell $w={24}><Filter /></Cell><Cell $w={10}><Caret /></Cell>
          </Segment>
          <Segment $pr={4}>
            <Grip w={8} /><Cell $w={22}><Arrow c="#3d82ee" /></Cell><Cell $w={12}><Caret /></Cell>
            <Cell $w={22}><Arrow right /></Cell><Cell $w={12}><Caret c="#999" /></Cell>
          </Segment>
          <Segment $pr={3}>
            <Grip w={8} /><Cell $w={18}><FolderUp /></Cell><Cell $w={28}><FolderRoot /></Cell><Cell $w={20}><Home /></Cell><Cell $w={26}><Refresh /></Cell>
            <Sep w={6} /><Cell $w={20}><Find /></Cell><Label $p={3} $w={57}>Find Files</Label><Sep w={8} /><Cell $w={18}><FolderTree /></Cell>
          </Segment>
        </ToolRow>
        <ToolRow $h={27}>
          <Segment $pr={2}>
            <Label $w={295} $r={4}>Properties</Label><Sep w={8} /><Cell $w={18}><NewFolder /></Cell><Label $p={6} $w={30}>New</Label><Cell $w={14}><Caret /></Cell>
          </Segment>
          <Segment>
            <Grip w={8} /><Cell $w={22}><PlusSq /></Cell><Cell $w={24}><SqIcon d="M3 7h8" /></Cell><Cell $w={22}><SqIcon d="M3 2.500L7 11l4-8.500M4.500 5.500h5" /></Cell>
          </Segment>
        </ToolRow>
      </ToolArea>
      <PathBar />
      <FileTable>
        <TRow $head>
          {['Name', 'Size', 'Changed', 'Rights', 'Owner'].map((t, i) => <TCell key={t} $head $first={i === 4} $w={rightCols[i]} $right={i === 1}>{t}</TCell>)}
        </TRow>
        {['', 'u25081...', 'u25081...', 'u25081...'].map((o, r) => (
          <TRow key={r}>{rightCols.map((w, i) => <TCell key={i} $first $w={w}>{i === 4 ? o : ''}</TCell>)}</TRow>
        ))}
        <TRow $fill>{rightCols.map((w, i) => <TCell key={i} $w={w} />)}</TRow>
      </FileTable>
      <PanelStatus>3.67 KB of 7.44 KB in 1 of 3</PanelStatus>
    </Panel>
  );
}

function NavAddress() {
  return (
    <AddressBox>
      <AddressEdit><DesktopIcon /><AddressClip>Windows\Start Menu\Programs\Visual Studio Code</AddressClip></AddressEdit>
      <Cell $w={18}><Chev c="#aaa" w={9} /></Cell><Cell $w={20}><NavArrow rot={180} c="#999" s={11} /></Cell>
    </AddressBox>
  );
}

function OpenDialog() {
  return (
    <Dialog $x={489} $y={194} $w={667} $h={471} $bg="#202020" $shadow="0 0 14px 3px rgba(0,0,0,.5)">
      <DialogTitle $dark $h={30} $pl={8} $pr={10}><Logo /><TitleText $m={5}>Select editor application.</TitleText><Cross c="#fff" sw={1.200} /></DialogTitle>
      <NavBar>
        <Cell $w={14}><NavArrow /></Cell><Cell $w={46}><NavArrow rot={180} c="#777" /></Cell><Cell $w={0}><Chev c="#ddd" w={7} sw={2.200} /></Cell>
        <Spacer $w={8} /><Cell $w={27}><NavArrow rot={90} /></Cell>
        <NavAddress />
        <SearchField>Search Desktop<Lens /></SearchField>
      </NavBar>
      <CommandBar>
        <Label $w={53}>Organize</Label><Caret c="#ccc" w={8} /><Label $p={30} $w={467}>New folder</Label>
        <Cell $w={14}><Svg w={14} h={11} vb="0 0 16 12"><rect width="16" height="12" fill="#eef3f7" /><rect x="1.500" y="1.500" width="13" height="9" fill="#a9cdec" /><path d="M1.500 5c4 0 7 3 13 2.500v3h-13z" fill="#3e6f8f" /></Svg></Cell>
        <Cell $w={30}><Caret c="#ccc" w={8} /></Cell>
        <Cell $w={36}><Svg w={16} h={12} vb="0 0 16 12"><rect width="16" height="12" fill="#eee" /><path d="M5 0v12" stroke="#999" /><rect x="10" width="6" height="12" fill="#3e9ade" /></Svg></Cell>
        <Cell $w={36}><Svg><circle cx="8" cy="8" r="7.500" fill="#0b6fd0" /><path d="M5.700 6.200c0-3 4.800-3 4.800-.2 0 1.700-2.300 1.800-2.300 3.600M8.200 11v1.600" stroke="#fff" strokeWidth="1.600" /></Svg></Cell>
      </CommandBar>
      <Browser>
        <Sidebar>
          <SideRow $root><SideIcon $root><Star /></SideIcon>Quick access</SideRow>
          {places.map(([n, ic, pin, sel]) => (
            <SideRow key={n} $sel={sel}><SideIcon>{ic}</SideIcon><SideText $pin={pin}>{n}</SideText>{pin && <Pin />}</SideRow>
          ))}
          <SideRow $root $gap={8}><SideIcon $root><Cloud /></SideIcon>OneDrive</SideRow>
        </Sidebar>
        <ScrollBar $w={19} $left><ScrollBtn><Chev up /></ScrollBtn><Thumb $h={97} /><ScrollBtn><Chev /></ScrollBtn></ScrollBar>
        <FileGrid>
          {items.map(([n, ic], i) => <FileItem key={i}><FileIcon>{ic}</FileIcon>{n}</FileItem>)}
        </FileGrid>
        <ScrollBar $w={16}><ScrollBtn><Chev up /></ScrollBtn><Thumb $h={199} /><ScrollBtn><Chev /></ScrollBtn></ScrollBar>
      </Browser>
      <Footer>
        <FooterLabel>File name:</FooterLabel>
        <NameBox><NameInput /><Chev w={9} /></NameBox>
        <TypeBox>Executable files (*.exe)<Chev w={9} /></TypeBox>
        <ButtonRow><Button $primary>Open</Button><Button>Cancel</Button></ButtonRow>
      </Footer>
      <ResizeGrip><Svg w={8} h={8} vb="0 0 9 9"><path d="M7 0h2v2H7zM7 3.500h2v2H7zM7 7h2v2H7zM3.500 3.500h2v2h-2zM3.500 7h2v2h-2zM0 7h2v2H0z" fill="#bbb" /></Svg></ResizeGrip>
    </Dialog>
  );
}

export default function App() {
  return (
    <Desktop>
      <Global />
      <TitleBar>
        <Logo /><TitleText $m={5}>api - u250811517.kamod@ftp.younggeeks.net - WinSCP</TitleText>
        <WindowButtons>
          <Svg w={10} h={10} vb="0 0 10 10"><path d="M0 5.500h10" stroke="#888" /></Svg>
          <Svg w={10} h={10} vb="0 0 10 10"><path d="M.5 2.500h7v7h-7zM2.500 2.500v-2h7v7h-2" stroke="#888" /></Svg>
          <Cross />
        </WindowButtons>
      </TitleBar>
      <MenuBar>
        <GripDots />
        <MenuItem $p={5} $w={42}>Local</MenuItem><MenuItem $w={36}>Mark</MenuItem><MenuItem $w={32}>Files</MenuItem><MenuItem $w={71}>Commands</MenuItem>
        <MenuItem $w={48}>Session</MenuItem><MenuItem $w={51}>Options</MenuItem><MenuItem $w={50}>Remote</MenuItem><MenuItem $w={40}>Help</MenuItem>
      </MenuBar>
      <ToolRow>
        <Segment $gap={2}>
          <Grip w={10} /><Cell $w={17}><Compare /></Cell><Cell $w={30}><SyncFolders /></Cell><Cell $w={16}><Synchronize /></Cell><Label $p={5} $w={72}>Synchronize</Label>
          <Sep w={10} /><Cell $w={18}><Terminal /></Cell><Cell $w={28}><Bolt /></Cell><Sep w={2} /><Cell $w={26}><RefreshWin /></Cell>
        </Segment>
        <Segment $pr={2} $gap={21}>
          <Grip w={8} /><Cell $w={20}><Gear /></Cell><Sep w={10} /><Cell $w={18}><Queue /></Cell><Label $p={4} $w={42}>Queue</Label><Cell $w={14}><Caret /></Cell>
        </Segment>
        <Segment $pr={2} $gap={4}>
          <Grip w={6} /><Label $p={4} $w={95}>Transfer Settings</Label><Combo $w={148} $p={1}><ComboText>Default</ComboText><ComboArrow><Caret /></ComboArrow></Combo>
        </Segment>
        <Segment $pr={2}><Grip w={6} /><Cell $w={22}><RedSync /></Cell><Cell $w={12}><Caret /></Cell></Segment>
      </ToolRow>
      <Tabs>
        <Tab $active $w={270}><Monitor /><TabTitle>u250811517.kamod@ftp.younggeeks.net</TabTitle><Cross s={9} c="#000" sw={1.200} /></Tab>
        <Tab $w={98}><Monitor star />New Session</Tab>
      </Tabs>
      <Panels><LeftPanel /><PanelGap /><RightPanel /></Panels>
      <StatusBar>
        <StatusCell $w={1143} /><StatusCell $w={32}><Padlock /></StatusCell><StatusCell $w={67}>FTP</StatusCell><StatusCell $w={33}><Zip /></StatusCell><StatusCell $w={79}>0:02:54</StatusCell>
      </StatusBar>
      <TaskBar>
        <TaskItem $w={49}><Svg><path d="M0 2.300L6.500 1.400v6.200H0zM7.300 1.300L16 0v7.600H7.300zM0 8.400h6.500v6.200L0 13.700zM7.300 8.400H16V16l-8.700-1.300z" fill="#000" /></Svg></TaskItem>
        <SearchBox><Lens s={16} c="#222" sw={1.200} />Type here to search</SearchBox>
        <TaskItem $w={50}><Svg><circle cx="8" cy="8" r="6.700" stroke="#111" strokeWidth="2" /></Svg></TaskItem>
        <TaskItem $w={46}><Svg><path d="M.5 0v3h10V0M.5 16v-3h10v3M.5 5.500h10v5H.5zM14 0v3M14 7v9" stroke="#111" strokeWidth="1.200" /><rect x="12.800" y="4" width="2.500" height="2.500" fill="#111" /></Svg></TaskItem>
        <Spacer $w={3} />
        <TaskItem $run><AppPink /></TaskItem><TaskItem $run><Explorer /></TaskItem><TaskItem><Word /></TaskItem><TaskItem $run><Skype /></TaskItem>
        <TaskItem $run><Chrome /></TaskItem><TaskItem $run><VStudio /></TaskItem><TaskItem $run><Wave /></TaskItem><TaskItem $run><Photo /></TaskItem>
        <TaskItem $run><AppWin /></TaskItem><TaskItem $run $active><ScpApp /></TaskItem>
        <Spacer />
        <TaskItem $w={26}><Chev up c="#111" w={12} sw={1.200} /></TaskItem>
        <TaskItem $w={23}><Svg><path d="M3 11a3 3 0 0 1 0-5.500 4.500 4.500 0 0 1 8-1.500 4 4 0 0 1 4 5l-3 3z" fill="#8a8a8a" stroke="#222" /><circle cx="11.500" cy="11.500" r="4.500" fill="#d82e35" /><path d="M9 11.500h5" stroke="#fff" strokeWidth="1.500" /></Svg></TaskItem>
        <TaskItem $w={25}><Svg><path d="M4.500 3.500H15.500v8H4.500M10 12v2.500M6.500 14.500h7M.5 1.500h4v4h-4zM2.500 5.500v6" stroke="#111" strokeWidth="1.100" /></Svg></TaskItem>
        <TaskItem $w={22}><Svg><path d="M.5 5.500h3l4-3.500v12l-4-3.500h-3z" stroke="#111" /><path d="M9.500 6q1.500 2 0 4" stroke="#111" /><path d="M11.500 4q3 4 0 8M13.500 2q4.500 6 0 12" stroke="#888" /></Svg></TaskItem>
        <Clock>10:46 AM<br />2/20/2020</Clock>
        <TaskItem $w={38}><Svg><path d="M.5 1.500h15v11h-5L8 15l-2-2.500H.5z" stroke="#111" strokeWidth="1.200" /></Svg></TaskItem>
        <Spacer $w={14} />
      </TaskBar>

      <Dialog $x={410} $y={128} $w={545} $h={471}>
        <DialogTitle $h={25} $pl={0} $pr={18}><TitleText>Preferences</TitleText><Help>?</Help><Cross /></DialogTitle>
        <PrefBody>
          <Tree>
            {tree.map(([n, sub, last, sel]) => (
              <TreeRow key={n}>{!!sub && <TreeBranch $last={last} />}<TreeText $sub={sub} $sel={sel}>{n}</TreeText></TreeRow>
            ))}
          </Tree>
          <PrefPage><PrefList /></PrefPage>
        </PrefBody>
      </Dialog>
      <Dialog $x={480} $y={167} $w={405} $h={393} $border="1px solid #999" $shadow="0 2px 12px rgba(0,0,0,.35)">
        <DialogTitle $h={26} $pl={0} $pr={18}><TitleText>Add editor</TitleText><Help>?</Help><Cross /></DialogTitle>
      </Dialog>
      <OpenDialog />
    </Desktop>
  );
}
